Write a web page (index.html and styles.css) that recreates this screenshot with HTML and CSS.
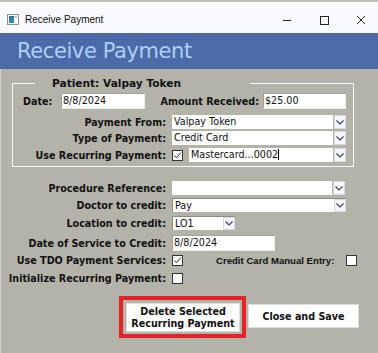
FILE: index.html
```html
<!DOCTYPE html>
<html>
<head>
  <meta charset="UTF-8">
  <meta name="viewport" content="width=device-width, initial-scale=1.0">
  <title>Receive Payment</title>
  <link rel="stylesheet" href="styles.css">
</head>
<body>
  <div class="titlebar">
    <svg class="app-icon" width="12" height="11" viewBox="0 0 12 11">
      <rect x="0.5" y="0.5" width="11" height="10" fill="#fff" stroke="#8a8f99"/>
      <rect x="2" y="2" width="5" height="7" fill="#2f8f9a"/>
      <rect x="2" y="2" width="5" height="3" fill="#3a6fc0"/>
      <rect x="8" y="2" width="2" height="2" fill="#b9c3d2"/>
    </svg>
    <span class="title">Receive Payment</span>
    <div class="win-controls">
      <svg width="10" height="10" viewBox="0 0 10 10"><line x1="1" y1="5.5" x2="9" y2="5.5" stroke="#222" stroke-width="1"/></svg>
      <svg width="10" height="10" viewBox="0 0 10 10"><rect x="1.5" y="1.5" width="8" height="8" fill="none" stroke="#222" stroke-width="1"/></svg>
      <svg width="10" height="10" viewBox="0 0 10 10"><path d="M1 1 L9 9 M9 1 L1 9" stroke="#222" stroke-width="1"/></svg>
    </div>
  </div>

  <div class="header">Receive Payment</div>

  <div class="content">
    <fieldset class="group">
      <legend>Patient: Valpay Token</legend>

      <div class="row row-date">
        <span class="lbl date-lbl">Date:</span>
        <div class="textbox date-box">8/8/2024</div>
        <span class="lbl amount-lbl">Amount Received:</span>
        <div class="textbox amount-box">$25.00</div>
      </div>

      <div class="row group-row">
        <span class="lbl group-lbl">Payment From:</span>
        <div class="combo">
          <div class="combo-field">Valpay Token</div>
          <div class="combo-btn"><svg width="8" height="5" viewBox="0 0 8 5"><path d="M0.5 0.5 L4 4 L7.5 0.5" fill="none" stroke="#3b3b5c" stroke-width="1.1"/></svg></div>
        </div>
      </div>

      <div class="row group-row row-type">
        <span class="lbl group-lbl">Type of Payment:</span>
        <div class="combo">
          <div class="combo-field">Credit Card</div>
          <div class="combo-btn"><svg width="8" height="5" viewBox="0 0 8 5"><path d="M0.5 0.5 L4 4 L7.5 0.5" fill="none" stroke="#3b3b5c" stroke-width="1.1"/></svg></div>
        </div>
      </div>

      <div class="row group-row row-recurring">
        <span class="lbl group-lbl">Use Recurring Payment:</span>
        <div class="check checked"><svg width="9" height="9" viewBox="0 0 9 9"><path d="M1.5 4.5 L3.5 6.8 L7.8 1.5" fill="none" stroke="#222" stroke-width="1"/></svg></div>
        <div class="combo recurring-combo">
          <div class="combo-field">Mastercard...0002<span class="caret"></span></div>
          <div class="combo-btn"><svg width="8" height="5" viewBox="0 0 8 5"><path d="M0.5 0.5 L4 4 L7.5 0.5" fill="none" stroke="#3b3b5c" stroke-width="1.1"/></svg></div>
        </div>
      </div>
    </fieldset>

    <div class="form">
      <div class="row row-procedure">
        <span class="lbl form-lbl">Procedure Reference:</span>
        <div class="combo">
          <div class="combo-field"></div>
          <div class="combo-btn"><svg width="8" height="5" viewBox="0 0 8 5"><path d="M0.5 0.5 L4 4 L7.5 0.5" fill="none" stroke="#3b3b5c" stroke-width="1.1"/></svg></div>
        </div>
      </div>

      <div class="row row-doctor">
        <span class="lbl form-lbl">Doctor to credit:</span>
        <div class="combo sunken">
          <div class="combo-field">Pay</div>
          <div class="combo-btn"><svg width="8" height="5" viewBox="0 0 8 5"><path d="M0.5 0.5 L4 4 L7.5 0.5" fill="none" stroke="#3b3b5c" stroke-width="1.1"/></svg></div>
        </div>
      </div>

      <div class="row row-location">
        <span class="lbl form-lbl">Location to credit:</span>
        <div class="combo sunken location-combo">
          <div class="combo-field">LO1</div>
          <div class="combo-btn"><svg width="8" height="5" viewBox="0 0 8 5"><path d="M0.5 0.5 L4 4 L7.5 0.5" fill="none" stroke="#3b3b5c" stroke-width="1.1"/></svg></div>
        </div>
      </div>

      <div class="row row-service">
        <span class="lbl form-lbl">Date of Service to Credit:</span>
        <div class="textbox service-box">8/8/2024</div>
      </div>

      <div class="row row-tdo">
        <span class="lbl form-lbl">Use TDO Payment Services:</span>
        <div class="check checked"><svg width="9" height="9" viewBox="0 0 9 9"><path d="M1.5 4.5 L3.5 6.8 L7.8 1.5" fill="none" stroke="#222" stroke-width="1"/></svg></div>
        <span class="manual-lbl">Credit Card Manual Entry:</span>
        <div class="check manual-check"></div>
      </div>

      <div class="row row-init">
        <span class="lbl form-lbl">Initialize Recurring Payment:</span>
        <div class="check"></div>
      </div>
    </div>

    <div class="actions">
      <div class="highlight">
        <button class="btn btn-delete">Delete Selected<br>Recurring Payment</button>
      </div>
      <button class="btn btn-close">Close and Save</button>
    </div>
  </div>
</body>
</html>
```

FILE: styles.css
```css
* {
  margin: 0;
  padding: 0;
  box-sizing: border-box;
}

body {
  width: 378px;
  height: 353px;
  overflow: hidden;
  background: #b4b3aa;
  font-family: "DejaVu Sans", Verdana, sans-serif;
  color: #111;
}

/* window chrome */
.titlebar {
  height: 33px;
  border-top: 2px solid #bdbdb5;
  background: #f9faff;
  display: flex;
  align-items: center;
  padding: 4px 0 0 7px;
}

.app-icon {
  margin-right: 6px;
}

.title {
  font-family: "Liberation Sans", Arial, sans-serif;
  font-size: 10px;
  color: #111;
}

.win-controls {
  margin-left: auto;
  margin-right: 12px;
  display: flex;
  gap: 27px;
}

.header {
  height: 36px;
  background: #4a6aa8;
  color: #acd0f4;
  font-size: 21px;
  letter-spacing: -0.4px;
  line-height: 36px;
  padding-left: 17px;
}

.content {
  padding: 7px 0 0 12px;
  border-left: 1px solid #d4d3cc;
  height: 284px;
}

/* patient group box */
.group {
  width: 342px;
  margin-left: -1px;
  border: 1px solid #f6f6f2;
  padding: 3px 7px 4px 0;
}

.group legend {
  margin-left: 22px;
  padding: 0 69px 0 17px;
  font-size: 10.6px;
  font-weight: bold;
  line-height: 14px;
}

.row {
  display: flex;
  align-items: center;
}

.lbl {
  font-size: 9.6px;
  font-weight: bold;
  white-space: nowrap;
}

.row-date {
  height: 16px;
}

.date-lbl {
  width: 48px;
  padding-left: 10px;
}

.date-box {
  width: 84px;
}

.amount-lbl {
  flex: 1;
  text-align: right;
  padding-right: 4px;
}

.amount-box {
  width: 83px;
}

.group-row {
  height: 14px;
  margin-top: 6px;
  gap: 6px;
}

.row-type {
  margin-top: 2px;
}

.row-recurring {
  margin-top: 3px;
}

.group-lbl {
  width: 153px;
  text-align: right;
}

/* inputs */
.textbox {
  height: 16px;
  background: #fff;
  border: 1px solid;
  border-color: #a3a29a #ecece8 #ecece8 #a3a29a;
  font-size: 9.6px;
  line-height: 14px;
  padding-left: 1px;
  white-space: nowrap;
}

.combo {
  flex: 1;
  height: 14px;
  display: flex;
  gap: 1px;
}

.combo-field {
  flex: 1;
  background: #fff;
  font-size: 9.6px;
  line-height: 14px;
  padding-left: 2px;
  white-space: nowrap;
}

.combo-btn {
  width: 12px;
  background: #f5f6fb;
  border: 1px solid #d8d8df;
  display: flex;
  align-items: center;
  justify-content: center;
}

.combo.sunken {
  border-top: 1px solid #8e8d85;
  border-left: 1px solid #8e8d85;
  background: #fff;
}

.caret {
  display: inline-block;
  width: 1px;
  height: 11px;
  background: #000;
  vertical-align: -2px;
}

.check {
  width: 11px;
  height: 11px;
  flex: none;
  background: #fff;
  border: 1px solid #333;
  display: flex;
  align-items: center;
  justify-content: center;
}

/* lower form */
.form {
  margin-top: 14px;
  margin-left: -13px;
}

.form .row {
  gap: 6px;
  height: 14px;
}

.form-lbl {
  width: 166px;
  text-align: right;
}

.row-procedure {
  padding-right: 33px;
}

.row-doctor {
  margin-top: 3px;
  padding-right: 32px;
}

.row-location {
  margin-top: 4px;
}

.location-combo {
  flex: none;
  width: 63px;
}

.form .row-service {
  margin-top: 5px;
  height: 16px;
}

.service-box {
  width: 103px;
}

.form .row-tdo {
  margin-top: 2px;
}

.manual-lbl {
  font-family: "Liberation Sans", Arial, sans-serif;
  font-size: 9.6px;
  font-weight: bold;
  margin-left: 27px;
  white-space: nowrap;
}

.manual-check {
  margin-left: 6px;
}

.form .row-init {
  margin-top: 4px;
}

/* buttons */
.actions {
  margin-top: 11px;
  padding-left: 106px;
  display: flex;
  align-items: flex-start;
  gap: 2px;
}

.highlight {
  border: 4px solid #e52129;
  padding: 3px 2px 2px 3px;
}

.btn {
  background: #fefefe;
  border: 1px solid #dedede;
  font-family: "DejaVu Sans", Verdana, sans-serif;
  font-size: 9.6px;
  font-weight: bold;
  color: #111;
}

.btn-delete {
  width: 114px;
  height: 29px;
  line-height: 12px;
}

.btn-close {
  width: 111px;
  height: 24px;
  margin-top: 8px;
}
```
